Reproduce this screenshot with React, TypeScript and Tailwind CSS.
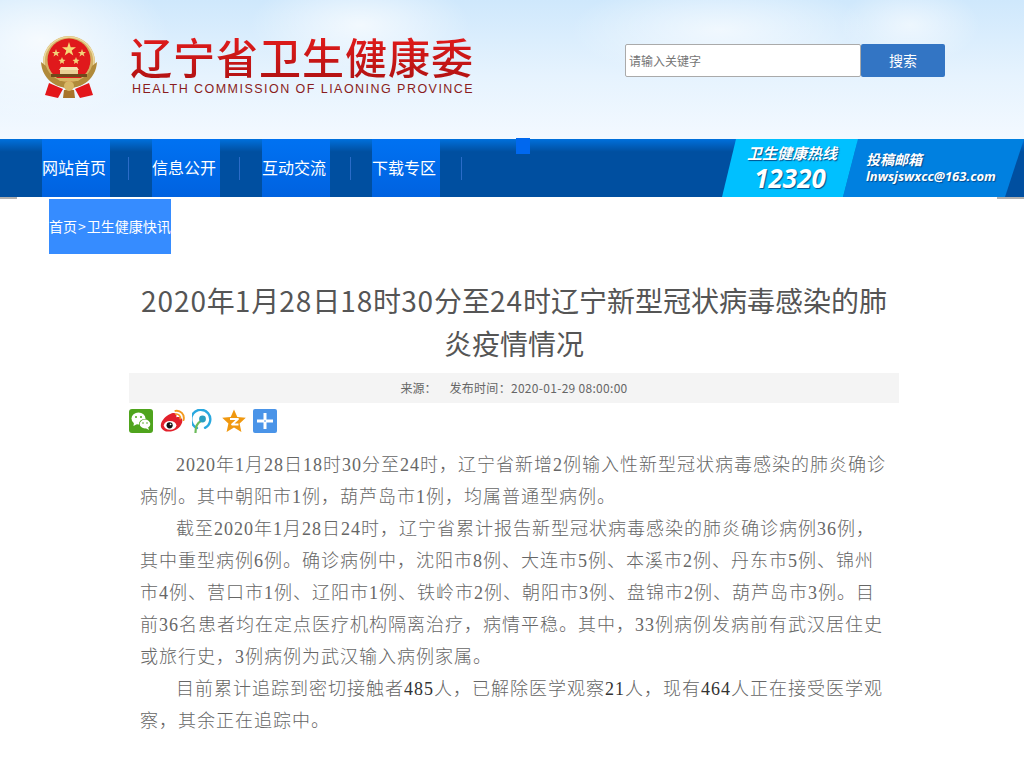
const navItems = ['网站首页', '信息公开', '互动交流', '下载专区'];

function titleDigits(text: string) {
  return text.split(/(\d+)/).map((part, i) =>
    /\d/.test(part) ? (
      <span key={i} className="tracking-[0.9px]">
        {part}
      </span>
    ) : (
      part
    ),
  );
}

function Emblem() {
  return (
    <svg width="58" height="64" viewBox="0 0 58 64" className="shrink-0">
      <circle cx="29" cy="27" r="26" fill="#d3b063" />
      <circle cx="29" cy="27" r="25" fill="none" stroke="#ecd9a0" strokeWidth="1.5" />
      <circle cx="29" cy="25" r="21.5" fill="#e0191c" />
      <path d="M9 48 L5 60 L18 63 L23 54 Z" fill="#e3161b" />
      <path d="M49 48 L53 60 L40 63 L35 54 Z" fill="#e3161b" />
      <path d="M1 27 C2 44 16 53 29 53 C42 53 56 44 57 27 L52 31 C49 41 39 47 29 47 C19 47 9 41 6 31 Z" fill="#b08a3a" />
      <path d="M23 63 L35 63 L34 55 L24 55 Z" fill="#a8742a" />
      <circle cx="29" cy="51" r="5" fill="#d8b765" />
      <path d="M29 7 L30.7 12.2 L36 12.2 L31.7 15.4 L33.3 20.5 L29 17.4 L24.7 20.5 L26.3 15.4 L22 12.2 L27.3 12.2 Z" fill="#f6d977" />
      <path d="M16 14 L17 17 L20 17 L17.6 18.8 L18.5 21.5 L16 19.8 L13.5 21.5 L14.4 18.8 L12 17 L15 17 Z" fill="#f2d37a" />
      <path d="M42 14 L43 17 L46 17 L43.6 18.8 L44.5 21.5 L42 19.8 L39.5 21.5 L40.4 18.8 L38 17 L41 17 Z" fill="#f2d37a" />
      <path d="M22 22 L23 24.5 L25.5 25 L23.6 26.6 L24 29 L22 27.6 L20 29 L20.4 26.6 L18.5 25 L21 24.5 Z" fill="#f2d37a" />
      <path d="M36 22 L37 24.5 L39.5 25 L37.6 26.6 L38 29 L36 27.6 L34 29 L34.4 26.6 L32.5 25 L35 24.5 Z" fill="#f2d37a" />
      <path d="M21 32 H37 L39 35 H19 Z" fill="#f5e2b0" />
      <rect x="20" y="35" width="18" height="4" fill="#e9cf95" />
      <rect x="11" y="39" width="36" height="3" fill="#6f4a1c" />
      <path d="M16 43 H42 L38 46 H20 Z" fill="#d8b765" />
    </svg>
  );
}

function WechatIcon() {
  return (
    <svg width="24" height="24" viewBox="0 0 24 24">
      <rect width="24" height="24" rx="3" fill="#4fa41d" />
      <ellipse cx="9.5" cy="9.5" rx="7" ry="6" fill="#fff" />
      <path d="M5 13 L4.5 17 L9 14.5 Z" fill="#fff" />
      <ellipse cx="16" cy="15" rx="6" ry="5" fill="#4fa41d" />
      <ellipse cx="16" cy="15" rx="5.3" ry="4.4" fill="#fff" />
      <path d="M19 18 L20 21 L16.5 19 Z" fill="#fff" />
      <circle cx="7" cy="8" r="1" fill="#4fa41d" />
      <circle cx="12" cy="8" r="1" fill="#4fa41d" />
      <circle cx="14" cy="14" r="0.8" fill="#4fa41d" />
      <circle cx="18" cy="14" r="0.8" fill="#4fa41d" />
    </svg>
  );
}

function WeiboIcon() {
  return (
    <svg width="25" height="24" viewBox="0 0 26 24">
      <path d="M10 5 C15 2 18 4 17 8 C22 7 24 10 23 13.5 C21 20 14 23.5 8 23 C3 22.5 0 19 1 15 C2 11 6 7 10 5 Z" fill="#e2202b" />
      <ellipse cx="10.5" cy="16.5" rx="6.5" ry="4.6" fill="#fff" />
      <circle cx="10" cy="16.5" r="3.2" fill="#111" />
      <circle cx="11" cy="15.5" r="0.9" fill="#fff" />
      <path d="M16 1.5 C21 0.5 26 5 24.5 11" fill="none" stroke="#f39a1f" strokeWidth="2" strokeLinecap="round" />
      <path d="M16.5 4.8 C19 4.3 22 7 21 9.5" fill="none" stroke="#f39a1f" strokeWidth="1.8" strokeLinecap="round" />
    </svg>
  );
}

function PengyouIcon() {
  return (
    <svg width="22" height="24" viewBox="0 0 22 24">
      <path d="M5 19 A9.5 9.5 0 1 1 13 18.8" fill="none" stroke="#29a8df" strokeWidth="2.4" strokeLinecap="round" />
      <path d="M3.5 23.5 C3.5 18 5 14 9 12" fill="none" stroke="#6cbb5a" strokeWidth="2.2" strokeLinecap="round" />
      <circle cx="10.5" cy="10" r="3.4" fill="#2a9fc0" />
    </svg>
  );
}

function QzoneIcon() {
  return (
    <svg width="24" height="24" viewBox="0 0 24 24" className="ml-[1px]">
      <path d="M12 0.5 L15.3 8 L23.8 8.8 L17.6 14.4 L19.4 23 L12 18.6 L4.6 23 L6.4 14.4 L0.2 8.8 L8.7 8 Z" fill="#f0980f" />
      <path d="M8 10 H16 L10 15.5 H16.5" fill="none" stroke="#fff" strokeWidth="1.8" strokeLinejoin="round" />
    </svg>
  );
}

function PlusIcon() {
  return (
    <svg width="24" height="24" viewBox="0 0 24 24">
      <rect width="24" height="24" rx="2" fill="#4a94e8" />
      <rect x="10.5" y="4" width="3" height="7.3" fill="#fff" />
      <rect x="10.5" y="12.7" width="3" height="7.3" fill="#fff" />
      <rect x="4" y="10.5" width="7.3" height="3" fill="#fff" />
      <rect x="12.7" y="10.5" width="7.3" height="3" fill="#fff" />
    </svg>
  );
}

export default function App() {
  return (
    <div className="h-[766px] overflow-hidden bg-white font-['Noto_Sans_CJK_SC',sans-serif]">
      {/* Header */}
      <div className="flex h-[139px] items-start bg-[radial-gradient(ellipse_130px_80px_at_40px_40px,#ffffffc0,transparent),radial-gradient(ellipse_110px_50px_at_360px_25px,#ffffffb0,transparent),radial-gradient(ellipse_150px_50px_at_720px_30px,#ffffffa0,transparent),radial-gradient(ellipse_70px_40px_at_910px_25px,#ffffff90,transparent),linear-gradient(#cfe8fc,#e6f3fe_55%,#f3f9ff)]">
        <div className="ml-[40px] mt-[35px]">
          <Emblem />
        </div>
        <div className="ml-[32px] mt-[30px]">
          <div className="bg-gradient-to-b from-[#e81c1c] to-[#b01212] bg-clip-text text-[42px] leading-[52px] font-medium tracking-[1px] text-transparent">
            辽宁省卫生健康委
          </div>
          <div className="ml-[2px] mt-[1px] font-['Liberation_Sans',sans-serif] text-[12.5px] leading-[12px] tracking-[1.46px] whitespace-nowrap text-[#8a1c20]">
            HEALTH COMMISSION OF LIAONING PROVINCE
          </div>
        </div>
        <div className="ml-[151px] mt-[44px] flex">
          <div className="flex h-[33px] w-[236px] items-center rounded-[2px] border border-[#aaaaaa] bg-white pl-[3px] text-[12px] text-[#757575]">
            请输入关键字
          </div>
          <button className="h-[33px] w-[84px] rounded-[2px] bg-[#3375c4] text-[14px] text-white">搜索</button>
        </div>
      </div>

      {/* Nav */}
      <div className="relative flex h-[58px] bg-[linear-gradient(#0070dc,#004fa0_22%)]">
        <div className="absolute left-[516px] top-[-1px] h-[16px] w-[14px] bg-[#0068ef]" />
        <div className="absolute left-[128px] top-[18px] flex gap-[110px]">
          {navItems.map((item) => (
            <div key={item} className="h-[23px] w-px bg-[#2b6cc8]" />
          ))}
        </div>
        <div className="flex gap-[42px] pl-[42px]">
          {navItems.map((item) => (
            <div
              key={item}
              className="flex h-[58px] w-[68px] items-center bg-[linear-gradient(#0072f2,#0062e0)] pb-[2px] text-[16px] whitespace-nowrap text-white"
            >
              {item}
            </div>
          ))}
        </div>
        <div className="ml-auto flex">
          <div className="z-10 -mr-[15px] flex h-[58px] w-[136px] flex-col items-center bg-[#00c0ff] [clip-path:polygon(14px_0,100%_0,121px_100%,0_100%)] [text-shadow:1px_1px_1px_#00508c]">
            <div className="mt-[4px] pl-[4px] text-[15px] leading-[20px] font-bold text-white italic">卫生健康热线</div>
            <div className="font-['Open_Sans',sans-serif] text-[26px] leading-[30px] font-bold text-white italic">12320</div>
          </div>
          <div className="h-[58px] w-[181px] bg-[#0080e0] pl-[23px] [clip-path:polygon(15px_0,100%_0,162px_100%,0_100%)] [text-shadow:1px_1px_1px_#004a90]">
            <div className="mt-[11px] text-[14px] leading-[19px] font-bold text-white italic">投稿邮箱</div>
            <div className="font-['Open_Sans',sans-serif] text-[13px] leading-[15px] font-bold whitespace-nowrap text-white italic">lnwsjswxcc@163.com</div>
          </div>
        </div>
      </div>

      <div className="flex h-[2px] justify-between">
        <div className="w-[17px] bg-[#b0b0b0]" />
        <div className="w-[27px] bg-[#b0b0b0]" />
      </div>

      {/* Breadcrumb */}
      <div className="ml-[49px] flex h-[55px] w-[122px] items-center overflow-hidden bg-[#368cff] text-[14px] whitespace-nowrap text-white">
        首页<span className="mx-[1px]">&gt;</span>卫生健康快讯
      </div>

      {/* Article */}
      <div className="ml-[129px] mt-[25px] w-[770px]">
        <h1 className="px-[10px] text-center text-[28px] leading-[43px] text-[#555555]">
          {titleDigits('2020年1月28日18时30分至24时辽宁新型冠状病毒感染的肺炎疫情情况')}
        </h1>
        <div className="mt-[8px] flex h-[30px] items-center justify-center gap-[13px] bg-[#f4f4f4] text-[12px] text-[#666666]">
          <span>来源：</span>
          <span className="tracking-[0.3px]">发布时间：2020-01-29 08:00:00</span>
        </div>
        <div className="mt-[6px] flex items-center gap-[7px]">
          <WechatIcon />
          <WeiboIcon />
          <PengyouIcon />
          <QzoneIcon />
          <PlusIcon />
        </div>
        <div className="mt-[16px] px-[11px] font-['Liberation_Serif','Noto_Sans_CJK_SC',serif] text-[18px] leading-[32px] font-light tracking-[1px] text-[#666666]">
          <p className="indent-[36px]">
            2020年1月28日18时30分至24时，辽宁省新增2例输入性新型冠状病毒感染的肺炎确诊病例。其中朝阳市1例，葫芦岛市1例，均属普通型病例。
          </p>
          <p className="indent-[36px]">
            截至2020年1月28日24时，辽宁省累计报告新型冠状病毒感染的肺炎确诊病例36例，其中重型病例6例。确诊病例中，沈阳市8例、大连市5例、本溪市2例、丹东市5例、锦州市4例、营口市1例、辽阳市1例、铁岭市2例、朝阳市3例、盘锦市2例、葫芦岛市3例。目前36名患者均在定点医疗机构隔离治疗，病情平稳。其中，33例病例发病前有武汉居住史或旅行史，3例病例为武汉输入病例家属。
          </p>
          <p className="indent-[36px]">
            目前累计追踪到密切接触者<span className="text-[#333333]">485</span>人，已解除医学观察<span className="text-[#333333]">21</span>人，现有<span className="text-[#333333]">464</span>人正在接受医学观察，其余正在追踪中。
          </p>
        </div>
      </div>
    </div>
  );
}
